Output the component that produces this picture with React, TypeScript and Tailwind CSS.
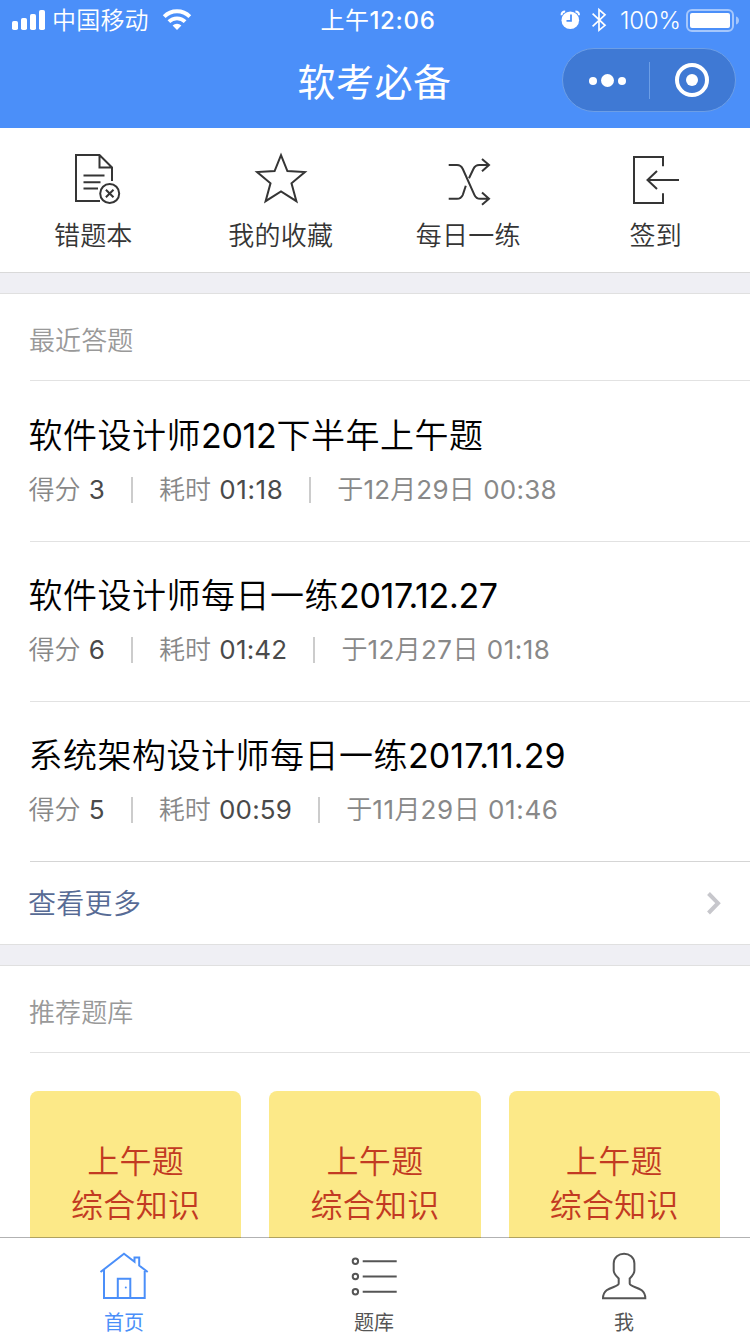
import type { ReactNode } from "react";

type Attempt = {
  title: string;
  score: string;
  time: string;
  date: string;
  titleDigits: string;
  timeDigits: string;
  dateDigits: string;
};

const attempts: Attempt[] = [
  {
    title: "软件设计师2012下半年上午题",
    score: "3",
    time: "01:18",
    date: "于12月29日 00:38",
    titleDigits: "font-normal tracking-[-0.3px]",
    timeDigits: "font-normal tracking-[0.6px]",
    dateDigits: "font-normal tracking-[0.25px]",
  },
  {
    title: "软件设计师每日一练2017.12.27",
    score: "6",
    time: "01:42",
    date: "于12月27日 01:18",
    titleDigits: "font-normal tracking-[-0.35px]",
    timeDigits: "font-normal tracking-[0.2px]",
    dateDigits: "font-normal tracking-[0.5px]",
  },
  {
    title: "系统架构设计师每日一练2017.11.29",
    score: "5",
    time: "00:59",
    date: "于11月29日 01:46",
    titleDigits: "font-normal tracking-[0.05px]",
    timeDigits: "font-normal tracking-[0.2px]",
    dateDigits: "font-normal tracking-[0.6px]",
  },
];

/* Gives runs of digits their own weight and tracking, apart from the Chinese text round them. */
function Mixed({ text, digits }: { text: string; digits: string }) {
  return (
    <>
      {text.split(/([0-9.:]+)/).map((part, i) =>
        i % 2 ? (
          <span key={i} className={digits}>
            {part}
          </span>
        ) : (
          part
        ),
      )}
    </>
  );
}

function StatusBar() {
  return (
    <div className="flex h-10 items-center justify-between">
      <div className="flex w-[250px] items-center pl-3">
        <svg width="34" height="40" viewBox="12 0 34 40" fill="#fff">
          <rect x="12" y="21" width="6" height="9" rx="1.8" />
          <rect x="21" y="18" width="6" height="12" rx="1.8" />
          <rect x="30" y="14" width="6" height="16" rx="1.8" />
          <rect x="39" y="10" width="6" height="20" rx="1.8" />
        </svg>
        <span className="ml-1.5 h-10 w-[98px] pt-px text-[24px] leading-10 tracking-[0.2px] whitespace-nowrap">中国移动</span>
        <svg className="ml-3" width="30" height="40" viewBox="162 0 30 40" fill="none" stroke="#fff">
          <path d="M164.2 16.6a18.2 18.2 0 0 1 25.6 0" strokeWidth="4" />
          <path d="M168.9 21.7a11.5 11.5 0 0 1 16.2 0" strokeWidth="3.8" />
          <path d="M172.6 25.6a6.2 6.2 0 0 1 8.8 0L177 30z" fill="#fff" stroke="none" />
        </svg>
      </div>
      <div className="h-10 w-[250px] pt-px pl-1.5 text-center text-[24px] leading-10">
        <span className="font-normal tracking-[0.5px]">上午</span>
        <span className="font-medium tracking-[0.7px]">12:06</span>
      </div>
      <div className="flex w-[250px] items-center justify-end pr-2.5">
        <svg width="52" height="40" viewBox="558 0 52 40" fill="none">
          <circle cx="570.3" cy="20.3" r="8.8" fill="#fff" />
          <path d="M571 14.500v6.300h-4.500" stroke="#4b8ff9" strokeWidth="1.8" />
          <path d="M561.600 15.200c0-2.200 1.200-3.600 3.600-3.600M575.400 11.600c2.400 0 3.600 1.400 3.600 3.600" stroke="#fff" strokeWidth="2" />
          <path d="M592.600 13.700L605 25.300L599 30.300V9.700L605 14.800L592.600 26.300" stroke="#fff" strokeWidth="1.7" />
        </svg>
        <span className="ml-2.5 h-10 w-[66px] pt-px text-[24px] leading-10 tracking-[-0.2px] whitespace-nowrap">100%</span>
        <svg width="54" height="40" viewBox="686 0 54 40" fill="none">
          <rect x="687" y="10" width="46" height="21" rx="5" stroke="#fff" strokeOpacity=".5" strokeWidth="2" />
          <rect x="690" y="13" width="40" height="15" rx="2" fill="#fff" />
          <path d="M736 16.500c4 1 4 7 0 8z" fill="#fff" fillOpacity=".5" />
        </svg>
      </div>
    </div>
  );
}

function NavBar() {
  return (
    <div className="grid h-[88px] grid-cols-3 items-start">
      <div />
      <h1 className="pt-0.5 pr-px text-center text-[38px] leading-[80px] font-normal tracking-[0.5px]">软考必备</h1>
      <div className="flex h-full items-start justify-end pt-2 pr-3.5">
        <div className="flex h-16 w-[174px] items-center rounded-full border border-[#6c9ee6] bg-[#3f79d4]">
          <svg width="86" height="62" viewBox="563 49 86 62" fill="#fff">
            <circle cx="593" cy="81" r="4" />
            <circle cx="607.5" cy="80.5" r="6.5" />
            <circle cx="622" cy="81" r="4" />
          </svg>
          <div className="h-[37px] w-px bg-[#6c9ee6]" />
          <svg width="85" height="62" viewBox="650 49 85 62" fill="none">
            <circle cx="692" cy="80" r="15" stroke="#fff" strokeWidth="4" />
            <circle cx="692" cy="80" r="6" fill="#fff" />
          </svg>
        </div>
      </div>
    </div>
  );
}

function Shortcut({ label, children, view }: { label: string; view: string; children: ReactNode }) {
  return (
    <div className="flex flex-col items-center pt-[22px]">
      <svg width="60" height="60" viewBox={view} fill="none" stroke="#353535" strokeWidth="2">
        {children}
      </svg>
      <span className="mt-[5px] pr-px text-[26px] leading-[42px] tracking-[0.2px] whitespace-nowrap text-[#353535]">{label}</span>
    </div>
  );
}

function Shortcuts() {
  return (
    <div className="grid h-[145px] grid-cols-4 border-b border-[#d9d9d9] bg-white">
      <Shortcut label="错题本" view="64 150 60 60">
        <path d="M100 201H76V155h23.500L112 167.500V181M99.500 155v12.500H112M83.500 175.600h21M83.500 182.300h17M83.500 188.500h14.500" />
        <circle cx="109.7" cy="193.5" r="9.5" />
        <path d="M105.900 189.700l7.600 7.600m0-7.600l-7.600 7.600" />
      </Shortcut>
      <Shortcut label="我的收藏" view="251 150 60 60">
        <path d="M281 155.200l6.400 15.900 17.500 1-13.400 11.200 4.900 17.900-15.400-9.700-15.400 9.700 4.900-17.900-13.400-11.200 17.500-1z" />
      </Shortcut>
      <Shortcut label="每日一练" view="439 150 60 60">
        <path d="M448.700 165h8.300q4 0 5.800 4l11.600 25.800q1.800 4 5.800 4H489M448.700 198.800h8.300q4 0 5.800-4l3-9M469 178.300l4.400-9.300q1.800-4 5.800-4H489M482 159l7 6-7 6.300M482 192.500l7 6.300-7 6" />
      </Shortcut>
      <Shortcut label="签到" view="626 150 60 60">
        <path d="M663 166.300V157h-29v46h29v-9.700M679 180h-31M657 171l-9.500 9 9.500 9" />
      </Shortcut>
    </div>
  );
}

function SectionHeading({ children }: { children: ReactNode }) {
  return (
    <div className="ml-[30px] flex h-[87px] items-center border-b border-[#e2e2e2] pt-2">
      <h2 className="-ml-px text-[26px] leading-[40px] tracking-[0.1px] text-[#999]">{children}</h2>
    </div>
  );
}

function AttemptRow({ item, last }: { item: Attempt; last: boolean }) {
  return (
    <div className={`ml-[30px] h-40 border-b pt-[30px] ${last ? "border-[#d5d5d5]" : "border-[#e2e2e2]"}`}>
      <h3 className="-ml-[1.5px] text-[34px] leading-[48px] tracking-[0.5px] whitespace-nowrap text-black">
        <Mixed text={item.title} digits={item.titleDigits} />
      </h3>
      <div className="mt-2.5 -ml-[1.5px] flex h-10 items-center text-[26px] leading-10 [word-spacing:1px] whitespace-nowrap text-[#888]">
        <span>
          得分 <span className="font-normal text-[#4a4a4a]">{item.score}</span>
        </span>
        <i className="mx-[26px] h-[26px] w-0.5 bg-[#ccc]" />
        <span className="text-[#888]">
          耗时{" "}
          <span className="text-[#4a4a4a]">
            <Mixed text={item.time} digits={item.timeDigits} />
          </span>
        </span>
        <i className="mx-[26px] h-[26px] w-0.5 bg-[#ccc]" />
        <span>
          <Mixed text={item.date} digits={item.dateDigits} />
        </span>
      </div>
    </div>
  );
}

function Tab({ label, view, color, children }: { label: string; view: string; color: string; children: ReactNode }) {
  return (
    <div className={`flex flex-col items-center pr-0.5 pt-2 ${color}`}>
      <svg width="60" height="60" viewBox={view} fill="none" stroke="currentColor" strokeWidth="2">
        {children}
      </svg>
      <span className="mt-px text-[20px] leading-[32px] font-normal">{label}</span>
    </div>
  );
}

function TabBar() {
  return (
    <nav className="relative -mt-px grid h-[97px] shrink-0 grid-cols-3 border-t border-black/30 bg-white bg-clip-padding">
      <Tab label="首页" view="94 1246 60 60" color="text-[#4b8ff9]">
        <path d="M100.500 1272L124 1253.800l10.500 8V1257.500h4.700v8l8.500 6.500M104 1269.500V1298h40.700v-28.500M117.800 1298v-19.300h12.500V1298" />
        <circle cx="125.8" cy="1287.5" r="1" fill="currentColor" stroke="none" />
      </Tab>
      <Tab label="题库" view="344 1246 60 60" color="text-[#555]">
        <circle cx="355.4" cy="1261.2" r="2.7" />
        <circle cx="355.4" cy="1276.5" r="2.7" />
        <circle cx="355.4" cy="1291.8" r="2.7" />
        <path d="M362.700 1261.200h34M362.700 1276.500h34M362.700 1291.800h34" />
      </Tab>
      <Tab label="我" view="594 1246 60 60" color="text-[#555]">
        <path d="M603 1298.300c0-12.300 15.700-10.300 15.700-14.800v-5c-2-2-5-4.500-5-8V1263.500c0-13 20.700-13 20.700 0v7c0 3.500-2.700 6-4.700 8v5c0 4.500 15.600 2.500 15.600 14.800z" />
      </Tab>
    </nav>
  );
}

export default function App() {
  return (
    <div className="flex h-[1334px] w-[750px] flex-col overflow-hidden bg-[#efeff4] font-['Inter','Noto_Sans_CJK_SC',sans-serif] font-[350]">
      <header className="h-32 shrink-0 bg-[#4b8ff9] text-white">
        <StatusBar />
        <NavBar />
      </header>
      <main className="min-h-0 flex-1 overflow-hidden">
        <Shortcuts />
        <section className="mt-5 border-y border-[#e0e0e0] bg-white">
          <SectionHeading>最近答题</SectionHeading>
          <div className="pt-px">
            {attempts.map((item, i) => (
              <AttemptRow key={item.title} item={item} last={i === attempts.length - 1} />
            ))}
          </div>
          <div className="flex h-[82px] items-center justify-between px-7">
            <span className="pt-px text-[28px] leading-10 tracking-[0.3px] text-[#576b95]">查看更多</span>
            <svg width="16" height="26" viewBox="706 890 16 26" fill="none" stroke="#c7c7cc" strokeWidth="4">
              <path d="M708.500 893.500l9.500 9.700-9.500 9.800" />
            </svg>
          </div>
        </section>
        <section className="mt-5 border-t border-[#e0e0e0] bg-white">
          <SectionHeading>推荐题库</SectionHeading>
          <div className="grid grid-cols-3 gap-7 px-[30px] pt-[38px]">
            {[0, 1, 2].map((i) => (
              <div key={i} className="h-[211px] rounded-lg bg-[#fce988] pt-[49px] text-center text-[32px] leading-[44px] tracking-[0.3px] text-[#c23a22]">
                上午题
                <br />
                综合知识
              </div>
            ))}
          </div>
        </section>
      </main>
      <TabBar />
    </div>
  );
}
